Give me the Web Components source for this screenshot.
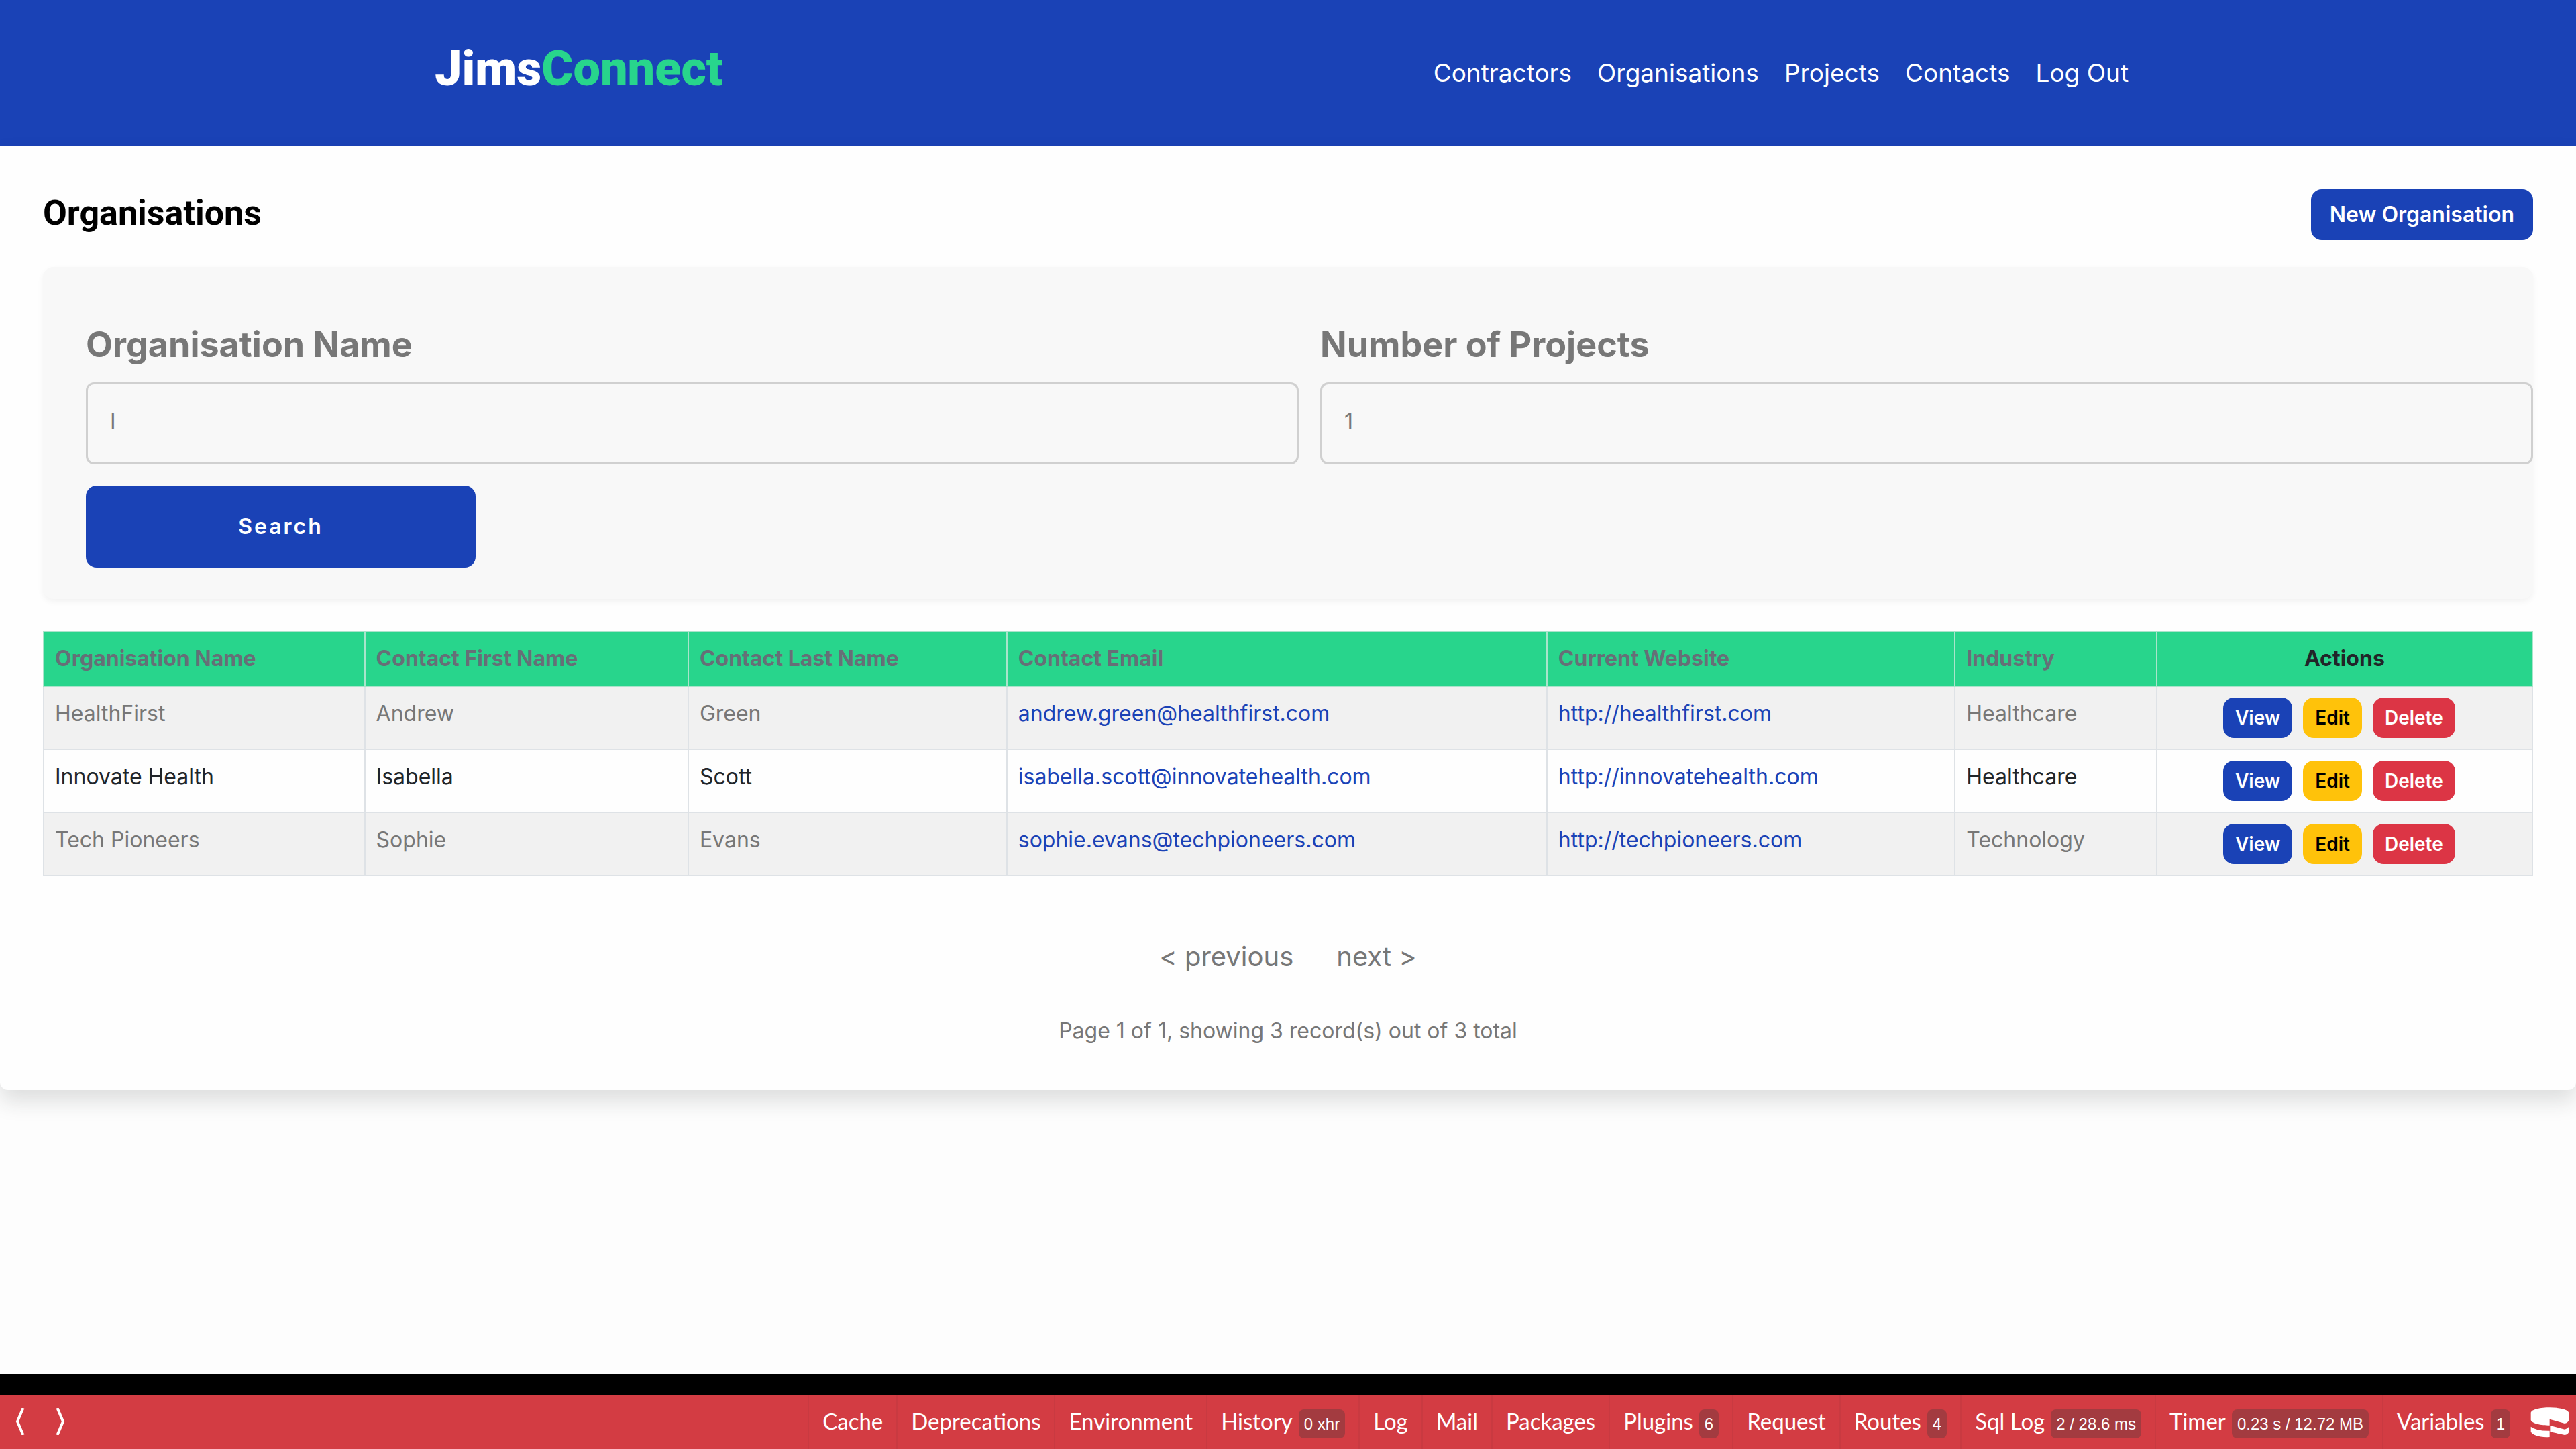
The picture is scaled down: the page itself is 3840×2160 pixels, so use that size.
<!DOCTYPE html>
<html lang="en">
<head>
<meta charset="utf-8">
<title>Organisations - JimsConnect</title>
<style>
  :root {
    --blue: #1a42b6;
    --green: #28d58c;
    --yellow: #ffc20a;
    --red: #dc3545;
    --muted: #777777;
    --ink: #212529;
    --line: #dee2e6;
  }
  body {
    margin: 0;
    background: #fdfdfd;
    color: var(--ink);
    font: 400 32px/48px Inter, "Liberation Sans", sans-serif;
  }
</style>
</head>
<body>
<jc-app>
  <jc-header slot="header"></jc-header>
  <jc-page-heading>
    Organisations
    <jc-action slot="action" size="large" label="New Organisation"></jc-action>
  </jc-page-heading>
  <jc-search></jc-search>
  <jc-table></jc-table>
  <jc-pager>Page 1 of 1, showing 3 record(s) out of 3 total</jc-pager>
  <jc-debug-bar slot="footer"></jc-debug-bar>
</jc-app>
<script>
const define = (name, html) => customElements.define(name, class extends HTMLElement {
  constructor() {
    super();
    this.attachShadow({ mode: 'open' });
  }
  connectedCallback() {
    this.shadowRoot.innerHTML = '<style>*{box-sizing:border-box}</style>' +
      (typeof html === 'function' ? html(this) : html);
  }
});

define('jc-app', `
  <style>
    :host { display: flex; flex-direction: column; min-height: 100vh; }
    main {
      padding: 64px;
      background: #fefefe;
      border-radius: 0 0 12px 12px;
      box-shadow: 0 16px 32px rgba(33, 37, 41, .15);
    }
    footer { margin-top: auto; }
  </style>
  <slot name="header"></slot>
  <main><slot></slot></main>
  <footer><slot name="footer"></slot></footer>
`);

define('jc-header', `
  <style>
    :host { display: block; background: var(--blue); }
    .inner {
      display: flex; align-items: center; justify-content: space-between;
      max-width: 2560px; height: 218px; margin: 0 auto; padding: 0 8px;
    }
    a { color: #fff; text-decoration: none; }
    .logo { font: 900 72px/84px Roboto, sans-serif; padding-bottom: 12px; }
    .logo span { color: var(--green); }
    nav { display: flex; font-size: 37px; line-height: 54px; }
    nav a { padding: 0 19px; }
  </style>
  <header class="inner">
    <a class="logo" href="#">Jims<span>Connect</span></a>
    <nav aria-label="Main">
      <a href="#">Contractors</a><a href="#">Organisations</a><a href="#">Projects</a><a href="#">Contacts</a><a href="#">Log Out</a>
    </nav>
  </header>
`);

define('jc-page-heading', `
  <style>
    :host { display: flex; justify-content: space-between; align-items: flex-start; }
    h1 { margin: 0; color: #000; font: 700 52px/72px Roboto, sans-serif; }
  </style>
  <h1><slot></slot></h1>
  <slot name="action"></slot>
`);

define('jc-action', el => `
  <style>
    :host { display: inline-block; }
    a {
      display: block; padding: 0 18px; border-radius: 16px;
      background: var(--blue); color: #fff; text-decoration: none; white-space: nowrap;
      font-weight: 600; font-size: 28px; line-height: 60px;
    }
    :host([size=large]) a { padding: 0 28px; font-size: 32px; line-height: 76px; }
    :host([kind=edit]) a { background: var(--yellow); color: #000; }
    :host([kind=delete]) a { background: var(--red); }
  </style>
  <a href="#">${el.getAttribute('label')}</a>
`);

define('jc-search', `
  <style>
    :host {
      display: block; margin-top: 40px; padding: 85px 0 47px 64px;
      background: #f8f8f8; border-radius: 16px; box-shadow: 0 4px 10px rgba(0, 0, 0, .05);
    }
    .fields { display: grid; grid-template-columns: 1fr 1fr; gap: 32px; }
    label {
      display: block; margin-bottom: 25px; color: var(--muted);
      font-weight: 700; font-size: 52px; line-height: 62px;
    }
    input {
      display: block; width: 100%; height: 122px; padding: 0 33px 6px;
      border: 3px solid #d0d0d0; border-radius: 12px; background: transparent;
      color: var(--muted); font: inherit;
    }
    button {
      display: block; width: 581px; height: 122px; margin-top: 32px; border: 0; border-radius: 16px;
      background: var(--blue); color: #fff; font: inherit; font-weight: 600; letter-spacing: 3px;
    }
  </style>
  <form onsubmit="return false">
    <div class="fields">
      <div><label for="name">Organisation Name</label><input id="name" type="text" value="I"></div>
      <div><label for="projects">Number of Projects</label><input id="projects" type="text" inputmode="numeric" value="1"></div>
    </div>
    <button type="submit">Search</button>
  </form>
`);

const organisations = [
  ['HealthFirst', 'Andrew', 'Green', 'andrew.green@healthfirst.com', 'http://healthfirst.com', 'Healthcare'],
  ['Innovate Health', 'Isabella', 'Scott', 'isabella.scott@innovatehealth.com', 'http://innovatehealth.com', 'Healthcare'],
  ['Tech Pioneers', 'Sophie', 'Evans', 'sophie.evans@techpioneers.com', 'http://techpioneers.com', 'Technology']
];

define('jc-table', () => `
  <style>
    :host { display: block; margin-top: 47px; }
    table { width: 100%; border-collapse: collapse; table-layout: fixed; font: inherit; }
    th, td { padding: 16px; border: 2px solid var(--line); text-align: left; vertical-align: top; }
    th { background: var(--green); border-color: #a9e4cb; font-weight: 700; color: #666f77; }
    th.actions { text-align: center; color: var(--ink); }
    tbody tr:nth-child(odd) { background: #f1f1f1; color: var(--muted); }
    td a { color: var(--blue); text-decoration: none; }
    .buttons { display: flex; justify-content: center; gap: 16px; padding-right: 16px; }
    .name { width: 12.9% } .first { width: 13% } .last { width: 12.8% } .email { width: 21.7% }
    .site { width: 16.4% } .industry { width: 8.1% } .actions { width: 15.1% }
  </style>
  <table>
    <thead><tr>
      <th class="name">Organisation Name</th><th class="first">Contact First Name</th><th class="last">Contact Last Name</th>
      <th class="email">Contact Email</th><th class="site">Current Website</th><th class="industry">Industry</th><th class="actions">Actions</th>
    </tr></thead>
    <tbody>${organisations.map(([name, first, last, email, site, industry]) => `
      <tr>
        <td>${name}</td><td>${first}</td><td>${last}</td>
        <td><a href="mailto:${email}">${email}</a></td><td><a href="${site}">${site}</a></td><td>${industry}</td>
        <td><div class="buttons">
          <jc-action label="View"></jc-action><jc-action kind="edit" label="Edit"></jc-action><jc-action kind="delete" label="Delete"></jc-action>
        </div></td>
      </tr>`).join('')}
    </tbody>
  </table>
`);

define('jc-pager', `
  <style>
    :host { display: block; margin-top: 90px; color: var(--muted); text-align: center; }
    nav { display: flex; justify-content: center; gap: 64px; font-size: 40px; line-height: 60px; }
    a { color: inherit; text-decoration: none; }
    p { margin: 57px 0 0; }
  </style>
  <nav aria-label="Pages"><a href="#">&lt; previous</a><a href="#">next &gt;</a></nav>
  <p><slot></slot></p>
`);

const panels = [
  ['Cache'], ['Deprecations'], ['Environment'], ['History', '0 xhr'], ['Log'], ['Mail'], ['Packages'],
  ['Plugins', '6'], ['Request'], ['Routes', '4'], ['Sql Log', '2 / 28.6 ms'], ['Timer', '0.23 s / 12.72 MB'], ['Variables', '1']
];

define('jc-debug-bar', () => `
  <style>
    :host {
      display: flex; height: 112px; border-top: 32px solid #000; box-sizing: border-box;
      background: #d33c43; color: #fff; font: 400 33px/76px Lato, sans-serif;
    }
    button { margin: 0; padding: 0; border: 0; background: none; color: inherit; font: inherit; }
    svg { display: block; }
    .arrows { display: flex; align-items: center; gap: 44px; padding: 0 22px 2px; }
    .panels { display: flex; margin-left: auto; }
    .panels button {
      display: flex; align-items: baseline; gap: 9px; padding: 0 20px; white-space: nowrap;
      border-left: 2px solid #c93a41;
    }
    .badge {
      padding: 8px; border-radius: 8px; background: #a33b40;
      font: 400 24px/27px "Liberation Sans", sans-serif;
    }
    .cake { padding: 0 10px; }
  </style>
  <div class="arrows">
    <button aria-label="Previous"><svg width="16" height="40" viewBox="0 0 16 40" fill="none" stroke="#fff" stroke-width="4"><path d="M12.500 0 4 20l8.500 20"/></svg></button>
    <button aria-label="Next"><svg width="16" height="40" viewBox="0 0 16 40" fill="none" stroke="#fff" stroke-width="4"><path d="M3.500 0 12 20 3.500 40"/></svg></button>
  </div>
  <div class="panels">${panels.map(([name, badge]) =>
    `<button><span>${name}</span>${badge ? `<span class="badge">${badge}</span>` : ''}</button>`).join('')}
  </div>
  <button class="cake" aria-label="Toggle toolbar">
    <svg width="58" height="45" viewBox="0 0 170 135" preserveAspectRatio="none" fill="#fff">
      <path d="M2 24C8-7 162-7 168 24V60Q162 69 150 72L84 53V80C48 80 6 72 2 56Z"/>
      <path d="M2 86Q25 105 84 104V132C45 136 6 122 2 108Z"/>
      <path d="M86 81 150 98Q163 95 168 86V110Q164 120 150 123L86 109Z"/>
    </svg>
  </button>
`);
</script>
</body>
</html>
